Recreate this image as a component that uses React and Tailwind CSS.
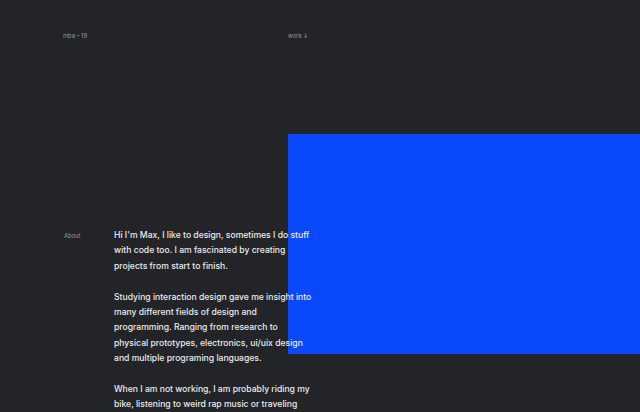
export default function App() {
  return (
    <div className="w-[640px] h-[412px] overflow-hidden bg-[#232428] text-[#ececec]" style={{ fontFamily: "Inter, 'Liberation Sans', sans-serif" }}>
      <header className="flex pt-[32px] h-[134px]">
        <div className="w-[288px] pl-[63px] text-[5.8px] leading-[8px] text-[#9a9a9e]">mba – 19</div>
        <div className="text-[5.8px] leading-[8px] text-[#9a9a9e]">work ↓</div>
      </header>
      <div className="ml-[288px] h-[220px] bg-[#0a48fb]"></div>
      <section className="relative z-10 -mt-[126px] flex">
        <div className="w-[50px] pl-[64px] box-content text-[5.8px] leading-[15.4px] text-[#9a9a9e] mt-[0px]">About</div>
        <div className="w-[200px] text-[8.6px] leading-[15.4px] font-medium flex flex-col gap-[15.4px]">
          <p>Hi I'm Max, I like to design, sometimes I do stuff with code too. I am fascinated by creating projects from start to finish.</p>
          <p>Studying interaction design gave me insight into many different fields of design and programming. Ranging from research to physical prototypes, electronics, ui/uix design and multiple programing languages.</p>
          <p>When I am not working, I am probably riding my bike, listening to weird rap music or traveling somewhere new.</p>
        </div>
      </section>
    </div>
  );
}
